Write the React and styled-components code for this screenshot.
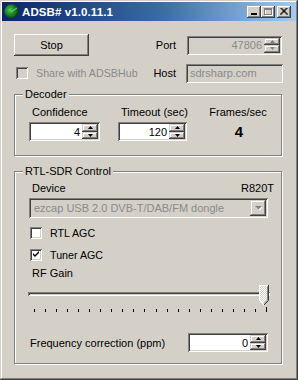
import React from 'react';
import styled, { createGlobalStyle } from 'styled-components';

const FONT = `"Liberation Sans", Arial, sans-serif`;
const raised = `inset -1px -1px #404040, inset 1px 1px #fff, inset -2px -2px #808080, inset 2px 2px #d4d0c8`;
const smallRaised = `inset -1px -1px #404040, inset 1px 1px #d4d0c8, inset -2px -2px #808080, inset 2px 2px #fff`;
const sunken = `inset 1px 1px #808080, inset -1px -1px #fff, inset 2px 2px #404040, inset -2px -2px #d4d0c8`;

const Global = createGlobalStyle`
  html, body { margin: 0; padding: 0; background: #d4d0c8; }
  body { font-family: ${FONT}; }
`;

const Window = styled.div`
  width: 298px;
  height: 380px;
  box-sizing: border-box;
  background: #d4d0c8;
  padding: 2px;
  box-shadow: inset -1px -1px #404040, inset 1px 1px #d4d0c8, inset -2px -2px #808080, inset 2px 2px #fff;
  font-family: ${FONT};
  font-size: 10.7px;
  color: #000;
  display: flex;
  flex-direction: column;
  overflow: hidden;
`;

const TitleBar = styled.div`
  height: 19px;
  display: flex;
  align-items: center;
  padding: 0 5px 0 2px;
  background: linear-gradient(to right, #0a246a 0%, #3a6ea5 55%, #a6caf0 100%);
`;

const TitleText = styled.span`
  margin-left: 3px;
  color: #fff;
  font-weight: bold;
  font-size: 11.5px;
  letter-spacing: 0.1px;
`;

const TitleButtons = styled.div`
  margin-left: auto;
  display: flex;
  align-items: center;
`;

const CaptionButton = styled.div`
  width: 14px;
  height: 12px;
  box-sizing: border-box;
  background: #d4d0c8;
  box-shadow: ${raised};
  display: flex;
  align-items: center;
  justify-content: center;
  margin-left: ${p => p.$gap || 0}px;
`;

const Body = styled.div`
  padding: 13px 13px 0 12px;
  display: flex;
  flex-direction: column;
`;

const TopGrid = styled.div`
  display: grid;
  grid-template-columns: 75px 1fr auto 97px;
  grid-template-rows: 22px 20px;
  row-gap: 7px;
  align-items: center;
`;

const PushButton = styled.div`
  height: 22px;
  box-sizing: border-box;
  box-shadow: ${raised};
  display: flex;
  align-items: center;
  justify-content: center;
  font-size: 11px;
`;

const FieldLabel = styled.span`
  justify-self: end;
  margin-right: 10px;
  font-size: 11px;
`;

const CheckRow = styled.label`
  display: flex;
  align-items: center;
  gap: 8px;
  margin-left: ${p => p.$indent || 0}px;
  color: ${p => (p.$disabled ? '#8a8a8a' : '#000')};
  grid-column: ${p => p.$span || 'auto'};
  height: 13px;
  margin-top: ${p => p.$mt || 0}px;
  white-space: nowrap;
`;

const CheckBox = styled.span`
  width: 12px;
  height: 12px;
  box-sizing: border-box;
  background: ${p => (p.$disabled ? '#d4d0c8' : '#fff')};
  box-shadow: ${sunken};
  display: flex;
  align-items: center;
  justify-content: center;
  flex: none;
`;

const Spin = styled.div`
  width: ${p => p.$w}px;
  height: ${p => p.$h || 19}px;
  box-sizing: border-box;
  padding: 2px;
  display: flex;
  background: ${p => (p.$disabled ? '#d4d0c8' : '#fff')};
  box-shadow: ${sunken};
  margin-left: ${p => p.$ml || 0}px;
`;

const SpinValue = styled.div`
  flex: 1;
  display: flex;
  align-items: center;
  justify-content: flex-end;
  padding-right: 2px;
  font-size: 11px;
  color: ${p => (p.$disabled ? '#8a8a8a' : '#000')};
`;

const SpinButtons = styled.div`
  width: 16px;
  display: flex;
  flex-direction: column;
`;

const SpinBtn = styled.div`
  flex: 1;
  background: #d4d0c8;
  box-shadow: ${smallRaised};
  display: flex;
  align-items: center;
  justify-content: center;
`;

const TextBox = styled.div`
  width: ${p => p.$w}px;
  height: ${p => p.$h}px;
  box-sizing: border-box;
  padding: 0 4px;
  display: flex;
  align-items: center;
  background: #d4d0c8;
  box-shadow: ${sunken};
  color: #8a8a8a;
  font-size: 11px;
`;

const Group = styled.div`
  position: relative;
  width: 268px;
  height: ${p => p.$h}px;
  box-sizing: border-box;
  border: 1px solid #808080;
  box-shadow: inset 1px 1px #fff, 1px 1px #fff;
  margin-top: ${p => p.$mt}px;
`;

const GroupCaption = styled.span`
  position: absolute;
  top: -7px;
  left: 8px;
  padding: 0 2px;
  line-height: 13px;
  background: #d4d0c8;
  font-size: 11px;
`;

const DecoderGrid = styled.div`
  display: grid;
  grid-template-columns: 71px 69px 66px;
  column-gap: 18px;
  grid-template-rows: 13px 19px;
  row-gap: 4px;
  padding: 10px 0 0 14px;
  align-items: center;
`;

const ColLabel = styled.span`
  padding-left: ${p => (p.$center ? 0 : 3)}px;
  text-align: ${p => (p.$center ? 'center' : 'left')};
  font-size: 11px;
  white-space: nowrap;
`;

const BigValue = styled.span`
  text-align: center;
  font-weight: bold;
  font-size: 15px;
  padding-left: 2px;
`;

const RtlContent = styled.div`
  display: flex;
  flex-direction: column;
  padding: 9px 0 0 14px;
  width: 242px;
`;

const SplitRow = styled.div`
  display: flex;
  justify-content: space-between;
  align-items: center;
  height: ${p => p.$h || 13}px;
  margin-top: ${p => p.$mt || 0}px;
  padding-left: ${p => p.$pl || 0}px;
  width: ${p => p.$w || 242}px;
  font-size: 11px;
`;

const Combo = styled.div`
  width: 239px;
  height: 20px;
  margin-top: 4px;
  box-sizing: border-box;
  padding: 2px;
  display: flex;
  background: #d4d0c8;
  box-shadow: ${sunken};
`;

const ComboText = styled.div`
  flex: 1;
  display: flex;
  align-items: center;
  padding-left: 3px;
  color: #8a8a8a;
  font-size: 11px;
  white-space: nowrap;
  overflow: hidden;
`;

const ComboBtn = styled.div`
  width: 16px;
  background: #d4d0c8;
  box-shadow: ${smallRaised};
  display: flex;
  align-items: center;
  justify-content: center;
`;

const PlainLabel = styled.div`
  margin-top: ${p => p.$mt || 0}px;
  padding-left: 3px;
  height: 13px;
  line-height: 13px;
  font-size: 11px;
`;

const Slider = styled.div`
  position: relative;
  width: 242px;
  height: 20px;
  margin-top: 5px;
  margin-left: -1px;
`;

const Track = styled.div`
  margin-top: 7px;
  height: 4px;
  box-sizing: border-box;
  background: #d4d0c8;
  box-shadow: inset 1px 1px #808080, inset -1px -1px #fff, inset 2px 2px #404040;
`;

const Thumb = styled.svg`
  position: absolute;
  top: 0;
  right: 1px;
`;

const Ticks = styled.svg`
  display: block;
  margin-top: 2px;
  margin-left: -1px;
`;

const Arrow = ({ up, color = '#000' }) => (
  <svg width="5" height="3" viewBox="0 0 5 3">
    {up ? <path d="M2.5 0 L5 3 H0 Z" fill={color} /> : <path d="M0 0 H5 L2.5 3 Z" fill={color} />}
  </svg>
);

const SpinBox = ({ value, w, h, disabled, ml }) => (
  <Spin $w={w} $h={h} $disabled={disabled} $ml={ml}>
    <SpinValue $disabled={disabled}>{value}</SpinValue>
    <SpinButtons>
      <SpinBtn><Arrow up color={disabled ? '#808080' : '#000'} /></SpinBtn>
      <SpinBtn><Arrow color={disabled ? '#808080' : '#000'} /></SpinBtn>
    </SpinButtons>
  </Spin>
);

const Check = ({ checked, disabled }) => (
  <CheckBox $disabled={disabled}>
    {checked && (
      <svg width="7" height="7" viewBox="0 0 7 7">
        <path d="M0 2 L2 4 L6 0 V2 L2 6 L0 4 Z" fill="#000" />
      </svg>
    )}
  </CheckBox>
);

const AppIcon = () => (
  <svg width="15" height="15" viewBox="0 0 15 15">
    <defs>
      <radialGradient id="rg" cx="0.4" cy="0.4" r="0.65">
        <stop offset="0" stopColor="#4fd04f" />
        <stop offset="0.55" stopColor="#1c7a22" />
        <stop offset="1" stopColor="#06300a" />
      </radialGradient>
    </defs>
    <circle cx="7.5" cy="7.5" r="7.2" fill="url(#rg)" />
    <circle cx="7.5" cy="7.5" r="4.5" fill="none" stroke="#2a9a30" strokeWidth="0.6" opacity="0.7" />
    <path d="M7.5 7.5 L13 4" stroke="#9aff9a" strokeWidth="0.8" opacity="0.8" />
  </svg>
);

const tickXs = Array.from({ length: 22 }, (_, i) => Math.round(6 + (i * 232) / 21));

export default function App() {
  return (
    <>
      <Global />
      <Window>
        <TitleBar>
          <AppIcon />
          <TitleText>ADSB# v1.0.11.1</TitleText>
          <TitleButtons>
            <CaptionButton>
              <svg width="6" height="7" viewBox="0 0 6 7"><rect x="0" y="5" width="6" height="2" fill="#000" /></svg>
            </CaptionButton>
            <CaptionButton>
              <svg width="9" height="8" viewBox="0 0 9 8">
                <rect x="1.5" y="1.5" width="7" height="6" fill="none" stroke="#fff" />
                <rect x="0.5" y="0.5" width="7" height="6" fill="none" stroke="#808080" />
                <rect x="0" y="1" width="8" height="1" fill="#808080" />
              </svg>
            </CaptionButton>
            <CaptionButton $gap={2}>
              <svg width="8" height="7" viewBox="0 0 8 7">
                <path d="M0.5 0 L7.5 7 M1.5 0 L8 6.5 M7.5 0 L0.5 7 M6.5 0 L0 6.5" stroke="#000" strokeWidth="1" />
              </svg>
            </CaptionButton>
          </TitleButtons>
        </TitleBar>

        <Body>
          <TopGrid>
            <PushButton>Stop</PushButton>
            <span />
            <FieldLabel>Port</FieldLabel>
            <SpinBox value="47806" w={95} h={19} disabled ml={1} />

            <CheckRow $disabled $span="1 / 3" $indent={2}>
              <Check disabled />
              Share with ADSBHub
            </CheckRow>
            <FieldLabel>Host</FieldLabel>
            <TextBox $w={97} $h={19}>sdrsharp.com</TextBox>
          </TopGrid>

          <Group $h={62} $mt={11}>
            <GroupCaption>Decoder</GroupCaption>
            <DecoderGrid>
              <ColLabel>Confidence</ColLabel>
              <ColLabel>Timeout (sec)</ColLabel>
              <ColLabel $center>Frames/sec</ColLabel>
              <SpinBox value="4" w={71} h={19} />
              <SpinBox value="120" w={69} h={19} />
              <BigValue>4</BigValue>
            </DecoderGrid>
          </Group>

          <Group $h={193} $mt={15}>
            <GroupCaption>RTL-SDR Control</GroupCaption>
            <RtlContent>
              <SplitRow $pl={3}>
                <span>Device</span>
                <span>R820T</span>
              </SplitRow>
              <Combo>
                <ComboText>ezcap USB 2.0 DVB-T/DAB/FM dongle</ComboText>
                <ComboBtn>
                  <svg width="7" height="5" viewBox="0 0 7 5">
                    <path d="M1 1 H8 L4.5 4.5 Z" fill="#fff" />
                    <path d="M0 0 H7 L3.5 3.5 Z" fill="#808080" />
                  </svg>
                </ComboBtn>
              </Combo>
              <CheckRow $mt={8} $indent={1}>
                <Check />
                RTL AGC
              </CheckRow>
              <CheckRow $mt={9} $indent={1}>
                <Check checked />
                Tuner AGC
              </CheckRow>
              <PlainLabel $mt={6}>RF Gain</PlainLabel>
              <Slider>
                <Track />
                <Thumb width="10" height="21" viewBox="0 0 10 21">
                  <defs>
                    <pattern id="dith" width="2" height="2" patternUnits="userSpaceOnUse">
                      <rect width="2" height="2" fill="#d4d0c8" />
                      <rect width="1" height="1" fill="#fff" />
                      <rect x="1" y="1" width="1" height="1" fill="#fff" />
                    </pattern>
                  </defs>
                  <path d="M0.5 0.5 H9.5 V15.5 L5 20 L0.5 15.5 Z" fill="url(#dith)" />
                  <path d="M0.5 15.5 V0.5 H9" stroke="#fff" fill="none" />
                  <path d="M0.5 15.5 L5 20" stroke="#fff" fill="none" />
                  <path d="M9.5 0 V15.5 L5 20" stroke="#404040" fill="none" />
                  <path d="M8.5 1.5 V15 L5 18.5" stroke="#808080" fill="none" />
                </Thumb>
              </Slider>
              <Ticks width="242" height="6" viewBox="0 0 242 6">
                {tickXs.map((x, i) => (
                  <rect key={i} x={x} y={i === tickXs.length - 1 ? 0 : 2} width="1" height={i === tickXs.length - 1 ? 5 : 3} fill="#000" />
                ))}
              </Ticks>
              <SplitRow $h={19} $mt={20} $pl={1} $w={238}>
                <span>Frequency correction (ppm)</span>
                <SpinBox value="0" w={80} h={19} />
              </SplitRow>
            </RtlContent>
          </Group>
        </Body>
      </Window>
    </>
  );
}
